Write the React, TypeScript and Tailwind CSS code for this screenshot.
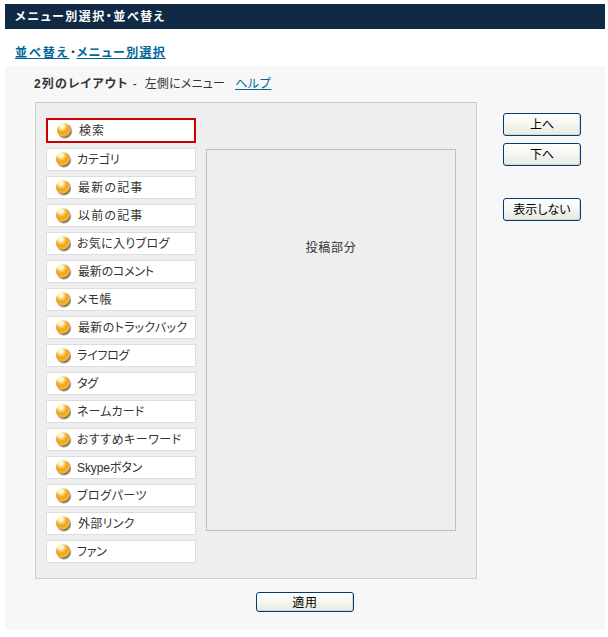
import { useState } from 'react';
import clsx from 'clsx';

const menuItems = [
  { label: '検索', spacing: 'tracking-[0.9px]' },
  { label: 'カテゴリ', spacing: 'tracking-[-0.1px]' },
  { label: '最新の記事', spacing: 'pl-px tracking-[1.2px]' },
  { label: '以前の記事', spacing: 'pl-px tracking-[1.2px]' },
  { label: 'お気に入りブログ', spacing: 'tracking-[0.3px]' },
  { label: '最新のコメント', spacing: 'pl-px tracking-[-0.2px]' },
  { label: 'メモ帳', spacing: 'tracking-[0.3px]' },
  { label: '最新のトラックバック', spacing: 'pl-px tracking-[0.3px]' },
  { label: 'ライフログ', spacing: 'tracking-[-0.3px]' },
  { label: 'タグ', spacing: 'tracking-[-0.3px]' },
  { label: 'ネームカード', spacing: 'tracking-[0.1px]' },
  { label: 'おすすめキーワード', spacing: 'tracking-[0.5px]' },
  { label: 'Skypeボタン', spacing: 'tracking-[-0.1px]' },
  { label: 'ブログパーツ', spacing: 'tracking-[0.5px]' },
  { label: '外部リンク', spacing: 'pl-px tracking-[0.3px]' },
  { label: 'ファン', spacing: 'tracking-[-0.3px]' },
];

function Ball() {
  return (
    <svg width="17" height="17" viewBox="0 0 17 17" className="shrink-0">
      <defs>
        <radialGradient id="ball" cx="0.36" cy="0.22" r="0.82">
          <stop offset="0" stopColor="#fffdf0" />
          <stop offset="0.22" stopColor="#fdeeb0" />
          <stop offset="0.42" stopColor="#f3b73a" />
          <stop offset="0.6" stopColor="#eda21c" />
          <stop offset="0.8" stopColor="#f4b844" />
          <stop offset="1" stopColor="#b57a1c" />
        </radialGradient>
        <radialGradient id="shade">
          <stop offset="0.75" stopColor="#444" stopOpacity="0.9" />
          <stop offset="1" stopColor="#888" stopOpacity="0" />
        </radialGradient>
      </defs>
      <circle cx="8.9" cy="9.2" r="7.9" fill="url(#shade)" />
      <circle cx="8" cy="8.2" r="7" fill="url(#ball)" />
    </svg>
  );
}

function PushButton({ label, className }: { label: string; className: string }) {
  return (
    <button
      className={clsx(
        'flex items-center justify-center rounded-[3px] border border-[#003c74] bg-linear-to-b from-white via-[#f5f5f1] to-[#e9e8e1] text-[12px] leading-none text-black shadow-[inset_-1px_-1px_0_#dcd8cf]',
        className,
      )}
    >
      {label}
    </button>
  );
}

export default function App() {
  const [selected, setSelected] = useState(0);

  return (
    <div className="h-[637px] w-[608px] bg-white pt-1 pl-[5px] font-['Liberation_Sans','Noto_Sans_CJK_JP',sans-serif] text-[12px] text-[#333] [font-feature-settings:'palt']">
      <h1 className="flex h-[25px] w-[600px] items-center bg-[#102a45] pl-[10px] text-[12px] font-bold text-white">
        <span className="tracking-[1.5px]">メニュー別選択・並べ替え</span>
      </h1>

      <nav className="flex h-[37px] items-center pt-[11px] pl-[10px] leading-[18px]">
        <a href="#order" className="font-bold tracking-[2px] text-[#006699] underline">並べ替え</a>
        <span className="w-[7px] text-center">・</span>
        <a href="#select" className="font-bold tracking-[1.3px] text-[#006699] underline">メニュー別選択</a>
      </nav>

      <main className="h-[564px] w-[600px] bg-[#f7f7f7] pl-[29px]">
        <div className="flex h-9 items-center leading-[18px]">
          <b className="tracking-[1.2px]">2列のレイアウト</b>
          <span className="ml-1">-</span>
          <span className="ml-2 tracking-[0.2px]">左側にメニュー</span>
          <a href="#help" className="ml-[10px] tracking-[0.6px] text-[#006699] underline">ヘルプ</a>
        </div>

        <div className="ml-px flex">
          <section className="flex h-[477px] w-[442px] border border-[#ccc] bg-[#eee] pt-[15px] pl-[10px]">
            <ul className="flex w-[150px] flex-col gap-[5px]">
              {menuItems.map(({ label, spacing }, i) => (
                <li
                  key={label}
                  onClick={() => setSelected(i)}
                  className={clsx(
                    'flex shrink-0 cursor-pointer items-center bg-white pl-2 leading-none whitespace-nowrap',
                    i === selected ? 'h-[25px] border-2 border-[#c00]' : 'h-[23px] border border-[#ddd]',
                  )}
                >
                  <Ball />
                  <span className={clsx('ml-[5px]', i === selected && 'pl-px', spacing)}>{label}</span>
                </li>
              ))}
            </ul>
            <div className="mt-[31px] ml-[10px] flex h-[382px] w-[250px] justify-center border border-[#bfbfbf] pt-[89px] leading-[18px] tracking-[0.8px]">
              投稿部分
            </div>
          </section>

          <aside className="ml-[26px] flex w-[78px] flex-col pt-[11px]">
            <PushButton label="上へ" className="h-[23px]" />
            <PushButton label="下へ" className="mt-[7px] h-[23px]" />
            <PushButton label="表示しない" className="mt-8 h-[23px]" />
          </aside>
        </div>

        <PushButton label="適用" className="mt-[13px] ml-[222px] h-5 w-[98px] pt-px tracking-[0.8px]" />
      </main>
    </div>
  );
}
